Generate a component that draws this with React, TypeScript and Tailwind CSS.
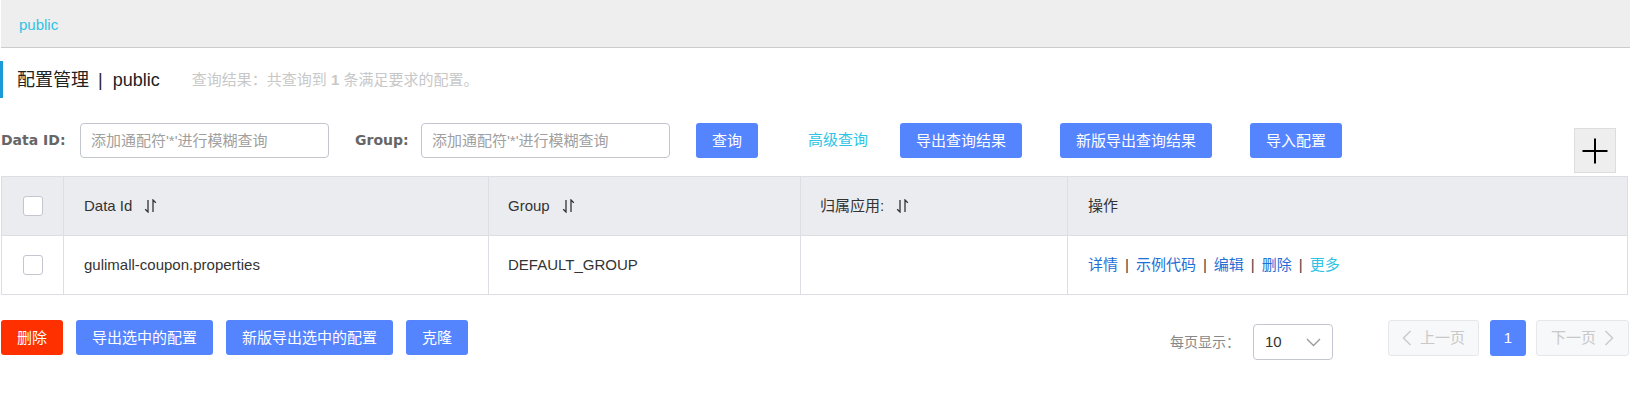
import React from "react";

function SortIcon() {
  return (
    <svg width="13" height="14" viewBox="0 0 13 14" className="ml-3 shrink-0">
      <path d="M4 1 V13 L1.2 10.2" fill="none" stroke="#333" strokeWidth="1.3" />
      <path d="M9 13 V1 L11.8 3.8" fill="none" stroke="#333" strokeWidth="1.3" />
    </svg>
  );
}

function Checkbox() {
  return <div className="w-[20px] h-[20px] rounded-[3px] border border-[#c4c6cf] bg-white" />;
}

function Btn({ children, red }: { children: React.ReactNode; red?: boolean }) {
  return (
    <button
      className={
        "h-[35px] px-4 rounded-[3px] text-[15px] text-white leading-none whitespace-nowrap " +
        (red ? "bg-[#ff3000]" : "bg-[#5584ff]")
      }
    >
      {children}
    </button>
  );
}

export default function App() {
  return (
    <div className="w-[1630px] pl-px font-['Liberation_Sans','Noto_Sans_CJK_SC',sans-serif] text-[#333] bg-white">
      {/* breadcrumb header */}
      <div className="h-[48px] bg-[#eeeeee] border-b border-[#cccccc] flex items-center pl-[18px] pt-[3px] text-[15px] text-[#2fc3e5]">
        public
      </div>

      {/* title */}
      <div className="mt-[13px] h-[37px] -ml-px border-l-[3px] border-[#1a9bd7] flex items-center pl-[14px]">
        <span className="text-[18px] text-[#222] leading-none">配置管理</span>
        <span className="text-[18px] text-[#222] leading-none ml-[9px] mr-[10px]">|</span>
        <span className="text-[18px] text-[#222] leading-none">public</span>
        <span className="ml-[32px] text-[15px] text-[#c8c8c8] leading-none">
          查询结果：共查询到 <b className="font-bold">1</b> 条满足要求的配置。
        </span>
      </div>

      {/* search row */}
      <div className="mt-[25px] flex items-start">
        <div className="h-[35px] w-[79px] flex items-center font-['DejaVu_Sans',sans-serif] font-bold text-[14px] text-[#666]">
          Data ID:
        </div>
        <input
          className="h-[35px] w-[249px] rounded-[4px] border border-[#c4c6cf] px-[10px] text-[15px] outline-none placeholder:text-[#a0a0a0]"
          placeholder="添加通配符'*'进行模糊查询"
        />
        <div className="ml-[26px] h-[35px] w-[66px] flex items-center font-['DejaVu_Sans',sans-serif] font-bold text-[14px] text-[#666]">
          Group:
        </div>
        <input
          className="h-[35px] w-[249px] rounded-[4px] border border-[#c4c6cf] px-[10px] text-[15px] outline-none placeholder:text-[#a0a0a0]"
          placeholder="添加通配符'*'进行模糊查询"
        />
        <div className="ml-[26px]">
          <Btn>查询</Btn>
        </div>
        <div className="ml-[50px] h-[35px] flex items-center text-[15px] text-[#2fc3e5] whitespace-nowrap">高级查询</div>
        <div className="ml-[32px]">
          <Btn>导出查询结果</Btn>
        </div>
        <div className="ml-[38px]">
          <Btn>新版导出查询结果</Btn>
        </div>
        <div className="ml-[38px]">
          <Btn>导入配置</Btn>
        </div>
        <div className="ml-auto mr-[14px] mt-[5px] w-[42px] h-[45px] bg-[#eeeeee] border border-[#dddddd] flex items-center justify-center">
          <svg width="26" height="26" viewBox="0 0 26 26">
            <path d="M13 0.5 V25.5 M0.5 13 H25.5" stroke="#000" strokeWidth="2" fill="none" />
          </svg>
        </div>
      </div>

      {/* table */}
      <div className="mt-[3px] w-[1627px] border border-[#dcdee3] text-[15px] text-[#333]">
        <div className="h-[59px] grid grid-cols-[62px_425px_312px_267px_1fr] bg-[#ebecf0] border-b border-[#dcdee3]">
          <div className="border-r border-[#dcdee3] flex items-center justify-center">
            <Checkbox />
          </div>
          <div className="border-r border-[#dcdee3] flex items-center pl-[20px]">
            Data Id
            <SortIcon />
          </div>
          <div className="border-r border-[#dcdee3] flex items-center pl-[19px]">
            Group
            <SortIcon />
          </div>
          <div className="border-r border-[#dcdee3] flex items-center pl-[19px]">
            归属应用:
            <SortIcon />
          </div>
          <div className="flex items-center pl-[20px]">操作</div>
        </div>
        <div className="h-[58px] grid grid-cols-[62px_425px_312px_267px_1fr] bg-white">
          <div className="border-r border-[#dcdee3] flex items-center justify-center">
            <Checkbox />
          </div>
          <div className="border-r border-[#dcdee3] flex items-center pl-[20px]">gulimall-coupon.properties</div>
          <div className="border-r border-[#dcdee3] flex items-center pl-[19px]">DEFAULT_GROUP</div>
          <div className="border-r border-[#dcdee3]" />
          <div className="flex items-center pl-[20px] whitespace-nowrap">
            <span className="text-[#1f6fd6]">详情</span>
            <span className="mx-[7px] text-[#444]">|</span>
            <span className="text-[#1f6fd6]">示例代码</span>
            <span className="mx-[7px] text-[#444]">|</span>
            <span className="text-[#1f6fd6]">编辑</span>
            <span className="mx-[7px] text-[#444]">|</span>
            <span className="text-[#1f6fd6]">删除</span>
            <span className="mx-[7px] text-[#444]">|</span>
            <span className="text-[#2fc3e5]">更多</span>
          </div>
        </div>
      </div>

      {/* bottom row */}
      <div className="mt-[25px] flex items-start">
        <Btn red>删除</Btn>
        <div className="ml-[13px]">
          <Btn>导出选中的配置</Btn>
        </div>
        <div className="ml-[13px]">
          <Btn>新版导出选中的配置</Btn>
        </div>
        <div className="ml-[13px]">
          <Btn>克隆</Btn>
        </div>

        <div className="ml-auto mr-px flex items-start">
          <div className="mt-[4px] h-[36px] flex items-center text-[14px] text-[#888] whitespace-nowrap">每页显示：</div>
          <div className="ml-[13px] mt-[4px] h-[36px] w-[80px] rounded-[4px] border border-[#c4c6cf] flex items-center justify-between pl-[11px] pr-[11px]">
            <span className="text-[15px] text-[#333]">10</span>
            <svg width="15" height="9" viewBox="0 0 15 9">
              <path d="M1 1 L7.5 7.5 L14 1" fill="none" stroke="#999" strokeWidth="1.3" />
            </svg>
          </div>
          <div className="ml-[55px] h-[36px] w-[91px] rounded-[3px] border border-[#e6e7eb] bg-[#f7f8fa] flex items-center justify-center text-[15px] text-[#c8c8c8]">
            <svg width="10" height="16" viewBox="0 0 10 16" className="mr-[8px]">
              <path d="M8.5 1 L1.5 8 L8.5 15" fill="none" stroke="#ccc" strokeWidth="1.6" />
            </svg>
            上一页
          </div>
          <div className="ml-[11px] h-[36px] w-[36px] rounded-[3px] bg-[#5584ff] text-white flex items-center justify-center text-[15px]">1</div>
          <div className="ml-[10px] h-[36px] w-[93px] rounded-[3px] border border-[#e6e7eb] bg-[#f7f8fa] flex items-center justify-center text-[15px] text-[#c8c8c8]">
            下一页
            <svg width="10" height="16" viewBox="0 0 10 16" className="ml-[8px]">
              <path d="M1.5 1 L8.5 8 L1.5 15" fill="none" stroke="#ccc" strokeWidth="1.6" />
            </svg>
          </div>
        </div>
      </div>
    </div>
  );
}
